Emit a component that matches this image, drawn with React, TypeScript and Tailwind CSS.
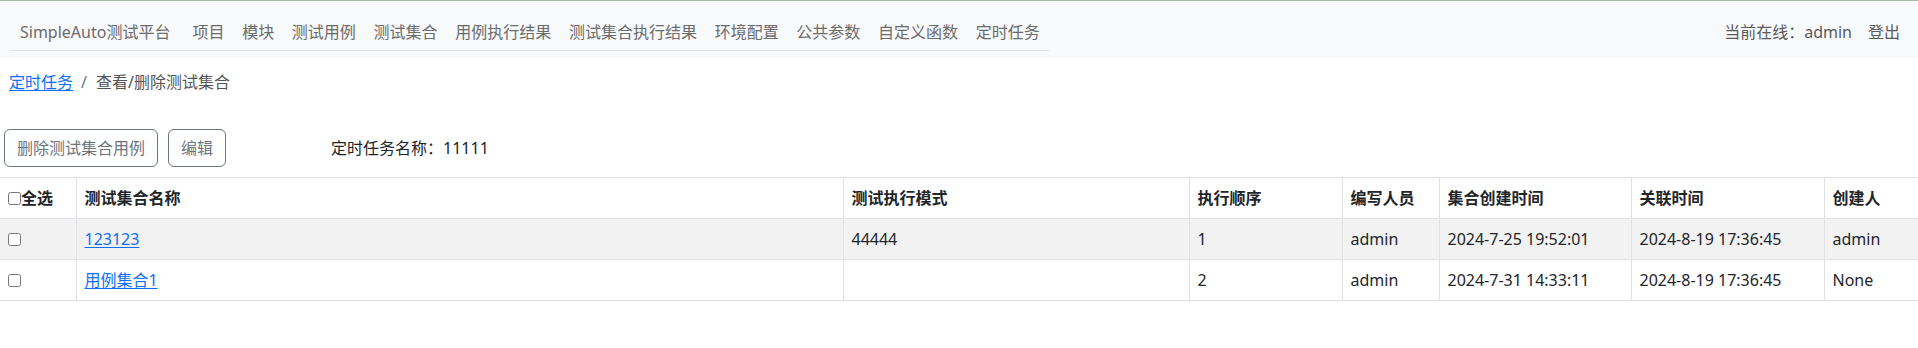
import React from "react";

const font = { fontFamily: '"Noto Sans", "Noto Sans CJK SC", sans-serif' };

const navItems = ["项目", "模块", "测试用例", "测试集合", "用例执行结果", "测试集合执行结果", "环境配置", "公共参数", "自定义函数", "定时任务"];

const cols = [76, 767, 346, 153, 97, 192, 193, 94];
const headers = ["测试集合名称", "测试执行模式", "执行顺序", "编写人员", "集合创建时间", "关联时间", "创建人"];

const rows = [
  { name: "123123", mode: "44444", order: "1", writer: "admin", created: "2024-7-25 19:52:01", linked: "2024-8-19 17:36:45", creator: "admin" },
  { name: "用例集合1", mode: "", order: "2", writer: "admin", created: "2024-7-31 14:33:11", linked: "2024-8-19 17:36:45", creator: "None" },
];

export default function App() {
  return (
    <div className="w-[1918px] h-[348px] bg-white text-[16px] leading-6 text-[#212529]" style={font}>
      {/* navbar */}
      <div className="h-[58px] border-t border-[#a3bba3] bg-[#f8f9fa] flex items-start justify-between pt-[19px]">
        <div className="ml-[11px] w-[1038px] border-b border-[#dee2e6] pl-[9px] pb-[6px] flex items-center text-[#6b6b6b]">
          <span className="mr-[22px]">SimpleAuto测试平台</span>
          <div className="flex gap-[17.7px]">
            {navItems.map((n) => (
              <span key={n}>{n}</span>
            ))}
          </div>
        </div>
        <div className="flex gap-4 pr-[18px] text-[#5a5a5a]">
          <span>当前在线：admin</span>
          <span>登出</span>
        </div>
      </div>

      {/* breadcrumb */}
      <div className="mt-3 pl-[9px] flex items-center">
        <a className="text-[#0d6efd] underline underline-offset-2">定时任务</a>
        <span className="pl-2 pr-[9px] text-[#6c757d]">/</span>
        <span className="text-[#555]">查看/删除测试集合</span>
      </div>

      {/* actions */}
      <div className="mt-[35px] pl-1 flex items-center h-[38px]">
        <button className="h-[38px] px-3 border border-[#6c757d] rounded-md text-[#6c757d]">删除测试集合用例</button>
        <button className="ml-[10px] h-[38px] px-3 border border-[#6c757d] rounded-md text-[#6c757d]">编辑</button>
        <span className="ml-[105px]">定时任务名称：11111</span>
      </div>

      {/* table */}
      <table className="mt-[10px] w-[1918px] border-collapse table-fixed">
        <colgroup>
          {cols.map((w, i) => (
            <col key={i} style={{ width: w }} />
          ))}
        </colgroup>
        <thead>
          <tr className="border-t border-b border-[#dee2e6]">
            <th className="p-2 text-left font-bold">
              <span className="flex items-center">
                <input type="checkbox" className="m-0 w-[13px] h-[13px]" />
                <span>全选</span>
              </span>
            </th>
            {headers.map((h) => (
              <th key={h} className="p-2 text-left font-bold border-l border-[#dee2e6]">
                {h}
              </th>
            ))}
          </tr>
        </thead>
        <tbody>
          {rows.map((r, i) => (
            <tr key={i} className={`border-b border-[#dee2e6] ${i === 0 ? "bg-[#f2f2f2]" : ""}`}>
              <td className="p-2">
                <span className="flex items-center h-6">
                  <input type="checkbox" className="m-0 w-[13px] h-[13px]" />
                </span>
              </td>
              <td className="p-2 border-l border-[#dee2e6]">
                <a className="text-[#0d6efd] underline underline-offset-2">{r.name}</a>
              </td>
              <td className="p-2 border-l border-[#dee2e6]">{r.mode}</td>
              <td className="p-2 border-l border-[#dee2e6]">{r.order}</td>
              <td className="p-2 border-l border-[#dee2e6]">{r.writer}</td>
              <td className="p-2 border-l border-[#dee2e6]">{r.created}</td>
              <td className="p-2 border-l border-[#dee2e6]">{r.linked}</td>
              <td className="p-2 border-l border-[#dee2e6]">{r.creator}</td>
            </tr>
          ))}
        </tbody>
      </table>
    </div>
  );
}
